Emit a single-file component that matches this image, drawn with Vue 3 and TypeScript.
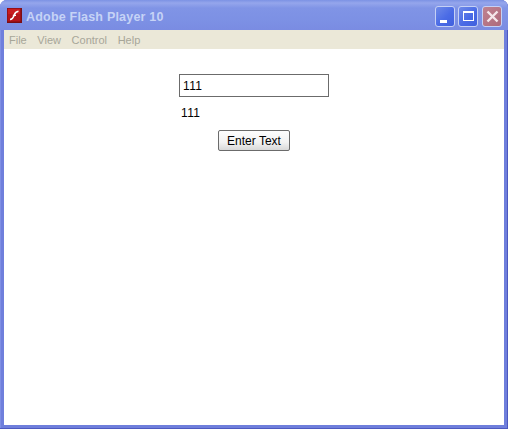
<template>
  <div class="window">
    <header class="titlebar">
      <svg class="app-icon" width="15" height="15" viewBox="0 0 15 15">
        <rect width="15" height="15" fill="#7a0d14" />
        <rect x="0.5" y="0.5" width="13" height="13" fill="#b5141a" />
        <rect x="1" y="1" width="12" height="5" fill="#c81c20" />
        <path d="M3 11.5C5.8 11.5 6.4 9.5 7.2 7C8 4.6 9 3.4 11.5 3.2" fill="none" stroke="#fff" stroke-width="1.6" />
        <path d="M5.8 7.4H9" stroke="#fff" stroke-width="1.2" />
      </svg>
      <span class="title">Adobe Flash Player 10</span>
      <div class="controls">
        <button class="ctl ctl-blue" aria-label="Minimize">
          <span class="min-glyph"></span>
        </button>
        <button class="ctl ctl-blue" aria-label="Maximize">
          <span class="max-glyph"></span>
        </button>
        <button class="ctl ctl-red" aria-label="Close">
          <svg width="13" height="13" viewBox="0 0 13 13">
            <path d="M1.5 1.5L11.5 11.5M11.5 1.5L1.5 11.5" stroke="#f4e6ea" stroke-width="2.4" />
          </svg>
        </button>
      </div>
    </header>
    <nav class="menubar">
      <span v-for="item in menu" :key="item" class="menu-item">{{ item }}</span>
    </nav>
    <main class="stage">
      <div class="form">
        <input v-model="text" class="field" type="text" />
        <div class="echo">{{ text }}</div>
        <button class="enter">Enter Text</button>
      </div>
    </main>
  </div>
</template>

<script setup lang="ts">
import { ref } from "vue";

const menu = ["File", "View", "Control", "Help"];
const text = ref("111");
</script>

<style>
html,
body {
  margin: 0;
  background: #fff;
}
</style>

<style scoped>
.window {
  width: 508px;
  height: 429px;
  box-sizing: border-box;
  display: flex;
  flex-direction: column;
  padding: 0 4px 4px;
  background: #6f7fdc;
  border-radius: 7px 7px 0 0;
  box-shadow: inset 0 -1px 0 #4d59c0, inset 1px 0 0 #7f8fe4, inset -1px 0 0 #4d59c0;
  font-family: "Liberation Sans", Arial, sans-serif;
}

.titlebar {
  height: 30px;
  flex: none;
  margin: 0 -4px;
  padding: 0 6px 0 7px;
  box-sizing: border-box;
  display: flex;
  align-items: center;
  gap: 4px;
  border-radius: 7px 7px 0 0;
  background: linear-gradient(#7c92e4 0, #95a6ec 3px, #8094e6 8px, #7c90e4 22px, #7a8ce2 100%);
}

.app-icon {
  flex: none;
}

.title {
  color: #c6d3f6;
  font-family: "Liberation Sans", Arial, sans-serif;
  font-size: 12.5px;
  font-weight: 700;
  letter-spacing: 0.2px;
  margin-top: 3px;
}

.controls {
  margin-left: auto;
  margin-top: 2px;
  display: flex;
  gap: 3px;
}

.ctl {
  width: 20px;
  height: 21px;
  box-sizing: border-box;
  padding: 0;
  display: flex;
  align-items: center;
  justify-content: center;
  border: 1px solid #c5d0f5;
  border-radius: 3px;
  position: relative;
}

.ctl-blue {
  background: linear-gradient(135deg, #6f8ae8, #4a6be6 55%, #4060dd);
}

.ctl-red {
  margin-left: 1px;
  background: linear-gradient(135deg, #bf8290, #ae6a7c);
}

.min-glyph {
  position: absolute;
  left: 4px;
  bottom: 3px;
  width: 7px;
  height: 3px;
  background: #fff;
}

.max-glyph {
  width: 9px;
  height: 7px;
  border: 1px solid #fff;
  border-top-width: 2px;
}

.menubar {
  height: 19px;
  flex: none;
  display: flex;
  align-items: center;
  gap: 10.6px;
  padding-left: 5px;
  background: #ebe8d8;
  color: #a7a698;
  font-family: "Liberation Sans", Arial, sans-serif;
  font-size: 11px;
}

.stage {
  flex: 1;
  background: #fff;
  display: flex;
  justify-content: center;
  padding-top: 25px;
}

.form {
  width: 150px;
  display: flex;
  flex-direction: column;
}

.field {
  width: 150px;
  height: 23px;
  box-sizing: border-box;
  border: 1px solid #6b6b6b;
  padding: 0 3px;
  font: 12px "Liberation Sans", Arial, sans-serif;
  letter-spacing: 0.4px;
  color: #000;
  outline: none;
}

.echo {
  height: 14px;
  margin-top: 9px;
  padding-left: 2px;
  font-size: 12px;
  line-height: 14px;
  letter-spacing: 0.4px;
  color: #000;
}

.enter {
  width: 72px;
  height: 21px;
  margin: 10px auto 0;
  padding: 0;
  box-sizing: border-box;
  border: 1px solid #6b6b6b;
  border-radius: 2px;
  background: linear-gradient(#fdfdfd, #f2f2f2 60%, #d8d8d8);
  font: 12px "Liberation Sans", Arial, sans-serif;
  color: #000;
}
</style>
